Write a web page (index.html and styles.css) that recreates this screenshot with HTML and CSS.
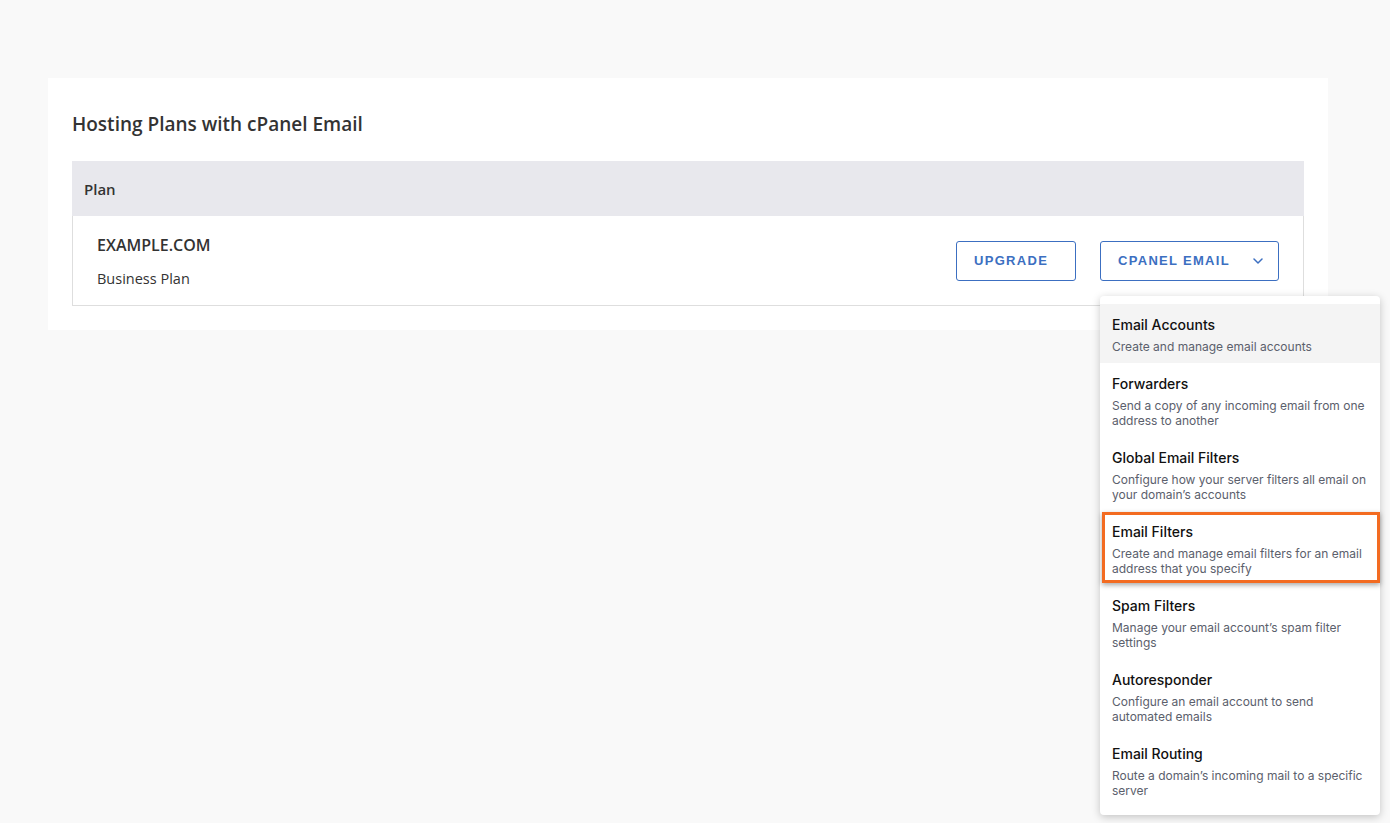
FILE: index.html
```html
<!DOCTYPE html>
<html lang="en">
<head>
  <meta charset="UTF-8">
  <meta name="viewport" content="width=device-width, initial-scale=1.0">
  <title>Hosting Plans with cPanel Email</title>
  <link rel="stylesheet" href="styles.css">
</head>
<body>
  <div class="card">
    <h2 class="card-title">Hosting Plans with cPanel Email</h2>
    <div class="plans">
      <div class="plans-head">Plan</div>
      <div class="plan-row">
        <div class="plan-info">
          <div class="plan-domain">EXAMPLE.COM</div>
          <div class="plan-name">Business Plan</div>
        </div>
        <div class="plan-actions">
          <button class="btn btn-upgrade">UPGRADE</button>
          <div class="menu-wrap">
            <button class="btn btn-menu">CPANEL EMAIL
              <svg class="chevron" width="10" height="6" viewBox="0 0 10 6"><path d="M1 1l4 4 4-4" fill="none" stroke="currentColor" stroke-width="1.5" stroke-linecap="round" stroke-linejoin="round"/></svg>
            </button>
            <ul class="menu">
              <li class="menu-item is-hover">
                <div class="menu-title">Email Accounts</div>
                <div class="menu-desc">Create and manage email accounts</div>
              </li>
              <li class="menu-item">
                <div class="menu-title">Forwarders</div>
                <div class="menu-desc">Send a copy of any incoming email from one address to another</div>
              </li>
              <li class="menu-item">
                <div class="menu-title">Global Email Filters</div>
                <div class="menu-desc">Configure how your server filters all email on your domain’s accounts</div>
              </li>
              <li class="menu-item is-marked">
                <div class="menu-title">Email Filters</div>
                <div class="menu-desc">Create and manage email filters for an email address that you specify</div>
              </li>
              <li class="menu-item">
                <div class="menu-title">Spam Filters</div>
                <div class="menu-desc">Manage your email account’s spam filter settings</div>
              </li>
              <li class="menu-item">
                <div class="menu-title">Autoresponder</div>
                <div class="menu-desc">Configure an email account to send automated emails</div>
              </li>
              <li class="menu-item">
                <div class="menu-title">Email Routing</div>
                <div class="menu-desc">Route a domain’s incoming mail to a specific server</div>
              </li>
            </ul>
          </div>
        </div>
      </div>
    </div>
  </div>
</body>
</html>
```

FILE: styles.css
```css
html {
  height: 100%;
}

body {
  margin: 0;
  min-height: 100%;
  box-sizing: border-box;
  padding: 78px 62px 0 48px;
  background: #f9f9f9;
  font-family: 'Open Sans', sans-serif;
  color: #333;
}

.card {
  background: #fff;
  padding: 34px 24px 24px;
}

.card-title {
  margin: 0 0 25px;
  font-size: 19px;
  font-weight: 600;
  line-height: 24px;
  color: #333;
}

.plans-head {
  height: 55px;
  display: flex;
  align-items: center;
  padding: 0 12px;
  background: #e8e8ed;
  font-size: 15px;
  font-weight: 600;
}

.plan-row {
  display: flex;
  align-items: center;
  justify-content: space-between;
  height: 89px;
  padding: 0 24px;
  border: 1px solid #dedede;
  border-top: none;
}

.plan-domain {
  font-size: 16px;
  font-weight: 600;
  line-height: 22px;
  margin-top: 2px;
}

.plan-name {
  font-size: 14.5px;
  line-height: 20px;
  margin-top: 13px;
}

.plan-actions {
  display: flex;
  gap: 24px;
}

.btn {
  height: 40px;
  padding: 0 17px;
  display: flex;
  align-items: center;
  background: #fff;
  border: 1px solid #3c6fc1;
  border-radius: 3px;
  color: #3c6fc1;
  font-family: 'Liberation Sans', Arial, sans-serif;
  font-size: 13px;
  font-weight: bold;
  letter-spacing: 1.3px;
  white-space: nowrap;
  cursor: pointer;
}

.btn-upgrade {
  width: 120px;
}

.btn-menu {
  width: 179px;
  padding-right: 15px;
  justify-content: space-between;
}

.menu-wrap {
  position: relative;
}

.menu {
  position: absolute;
  top: 55px;
  left: 0;
  width: 280px;
  margin: 0;
  padding: 8px 0;
  list-style: none;
  background: #fff;
  border-radius: 4px;
  box-shadow: 0 2px 8px rgba(0, 0, 0, 0.22);
  font-family: Inter, sans-serif;
  box-sizing: border-box;
}

.menu-item {
  position: relative;
  padding: 12px 12px 9px;
}

.menu-item.is-hover {
  background: #f4f4f4;
}

.menu-item.is-marked::after {
  content: "";
  position: absolute;
  top: 1px;
  bottom: 2px;
  left: 2px;
  right: 0;
  border: 3px solid #f36b21;
  box-shadow: 0 2px 5px rgba(0, 0, 0, 0.35);
}

.menu-title {
  font-size: 14px;
  font-weight: 500;
  line-height: 18px;
  color: #111;
}

.menu-desc {
  margin-top: 5px;
  font-size: 12px;
  line-height: 15px;
  color: #5b606c;
}
```
